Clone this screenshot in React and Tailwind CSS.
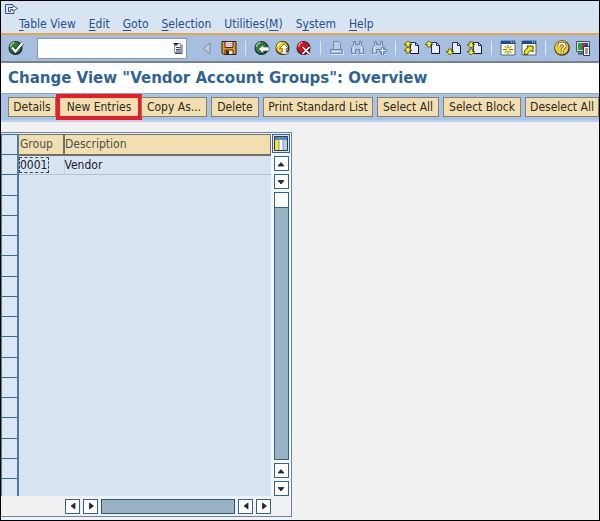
import React from "react";

const GREEN = "#2f7d3a";

function Icon({ children }) {
  return (
    <svg viewBox="0 0 16 16" className="block h-4 w-4" aria-hidden="true">
      {children}
    </svg>
  );
}

function Ball({ fill, shine }) {
  return (
    <>
      <circle cx="7.5" cy="8" r="7" fill="#1d2420" />
      <circle cx="7.2" cy="7.6" r="5.9" fill={fill} />
      <path d="M2.5 7a5 5 0 0 1 4-4.500" fill="none" stroke={shine} strokeWidth="1.6" />
    </>
  );
}

function Page() {
  return (
    <>
      <path d="M6.500 2.500h5l3 3v8h-8z" fill="#e6eefb" stroke="#26334d" />
      <path d="M11.500 2.500v3h3" fill="none" stroke="#26334d" />
      <path d="M7 13.500h7.500v-7" fill="none" stroke="#10182b" />
    </>
  );
}

function ArrowUp({ y }) {
  return (
    <path
      transform={`translate(0 ${y})`}
      d="M4 0l4 3.500H5.700V6H2.300V3.500H0z"
      fill="#f5ec1d"
      stroke="#3d3a08"
      strokeWidth=".7"
    />
  );
}

function ArrowDown({ y }) {
  return (
    <path
      transform={`translate(0 ${y})`}
      d="M4 6l4-3.500H5.700V0H2.300v2.500H0z"
      fill="#f5ec1d"
      stroke="#3d3a08"
      strokeWidth=".7"
    />
  );
}

function Binoculars({ plus }) {
  return (
    <>
      <path
        d="M3.500 1.500h2v3h4v-3h2v4l2 2v6h-4v-4h-4v4h-4v-6l2-2z"
        fill="#b3c9e6"
        stroke="#6985aa"
      />
      <path d="M2 14.500h4M10 14.500h4M3.500 6v6M11.500 6v6" stroke="#dce8f7" fill="none" />
      {plus && (
        <path
          d="M10.500 7.500h2v2h3v2h-3v3h-2v-3h-2v-2h2z"
          fill="#e3edf9"
          stroke="#6985aa"
        />
      )}
    </>
  );
}

function Window({ children }) {
  return (
    <>
      <path d="M1 1h14v14H1z" fill="#fffce0" stroke="#53687d" />
      <path d="M1 1h14v3H1z" fill="#1b4e96" />
      <path d="M11 2h1M13 2h1" stroke="#fff" />
      {children}
    </>
  );
}

const toolGroups = [
  [
    {
      name: "Collapse",
      icon: <path d="M10 3v11L3.500 8.500z" fill="#c9ced6" stroke="#7d8795" />,
    },
    {
      name: "Save",
      icon: (
        <>
          <path d="M1 1.500h14v13H2.500L1 13z" fill="#e99a20" stroke="#2b1a10" />
          <path d="M4 1.500h8v6H4z" fill="#f1d9de" stroke="#4a2216" />
          <path d="M5 3.500h6M5 5.500h6" stroke="#d8a9b3" />
          <path d="M4 10h8v4.500H4z" fill="#f8ecd0" stroke="#4a2216" />
          <path d="M5 10.500h3v4H5z" fill="#4a2216" />
        </>
      ),
    },
  ],
  [
    {
      name: "Back",
      icon: (
        <>
          <Ball fill={GREEN} shine="#8fcf8d" />
          <path d="M4.500 9l5-4.500V7H15v4H9.500v2.500z" fill="#fff" stroke="#24452a" strokeWidth=".6" />
        </>
      ),
    },
    {
      name: "Exit",
      icon: (
        <>
          <Ball fill="#f4c51c" shine="#fff59a" />
          <path d="M9 4l4.500 4.500H11V12h2v2H6v-2h1.500V8.500H4.500z" fill="#fff" stroke="#6b5210" strokeWidth=".7" />
        </>
      ),
    },
    {
      name: "Cancel",
      icon: (
        <>
          <Ball fill="#d3121d" shine="#f58c86" />
          <path d="M6.500 7l7 7M13.500 7l-7 7" stroke="#6d0b10" strokeWidth="3" />
          <path d="M6.500 7l7 7M13.500 7l-7 7" stroke="#fff" strokeWidth="1.700" />
        </>
      ),
    },
  ],
  [
    {
      name: "Print",
      icon: (
        <>
          <path d="M4.500 9.500v-8h5l2 2v6" fill="#b7cce8" stroke="#7089ad" />
          <path d="M1.500 9.500h12v4h-12z" fill="#a6bddb" stroke="#7089ad" />
          <path d="M2 14.500h12.500v-4M3 11.500h8" fill="none" stroke="#dce8f7" />
        </>
      ),
    },
    { name: "Find", icon: <Binoculars /> },
    { name: "Find next", icon: <Binoculars plus /> },
  ],
  [
    { name: "First page", icon: (<><Page /><ArrowUp y={1} /><ArrowUp y={7} /></>) },
    { name: "Previous page", icon: (<><Page /><ArrowUp y={1} /></>) },
    { name: "Next page", icon: (<><Page /><ArrowDown y={9} /></>) },
    { name: "Last page", icon: (<><Page /><ArrowDown y={2} /><ArrowDown y={9} /></>) },
  ],
  [
    {
      name: "New session",
      icon: (
        <Window>
          <path d="M8 5v9M3 9.500h10M4.500 6l7 7M11.500 6l-7 7" stroke="#77720c" />
          <path d="M6.500 8h3v3h-3z" fill="#fff34a" />
        </Window>
      ),
    },
    {
      name: "Create shortcut",
      icon: (
        <Window>
          <path d="M3 14.500c0-4 1.500-6 4-6.500L6 6h6v6l-2-1.500c-2 .5-3 2-3.500 4z" fill="#f2e32b" stroke="#3d3a08" strokeWidth=".9" />
        </Window>
      ),
    },
  ],
  [
    {
      name: "Help",
      icon: (
        <>
          <circle cx="8" cy="8" r="7.800" fill="#3e3514" />
          <circle cx="7.700" cy="7.600" r="6.800" fill="#f1ca2c" />
          <path d="M5 6.500c0-4 6-4 6-.5 0 2-2.700 2-2.700 4.500M8.300 11.500v2" fill="none" stroke="#6d5311" strokeWidth="3.200" />
          <path d="M5 6.500c0-4 6-4 6-.5 0 2-2.700 2-2.700 4.500M8.300 11.500v2" fill="none" stroke="#fffdf0" strokeWidth="1.700" />
        </>
      ),
    },
    {
      name: "Customize layout",
      icon: (
        <>
          <path d="M1.500 1.500h13v10h-13z" fill="#d9e1e8" stroke="#46515e" />
          <path d="M3 3h4v7H3z" fill="#1fa53c" />
          <path d="M7 3h3v7H7z" fill="#dc1d2a" />
          <path d="M10 3h3v7h-3z" fill="#2848b8" />
          <path d="M3 13.500h6" stroke="#46515e" strokeWidth="2" />
          <path d="M8.500 6.500h6v9h-6z" fill="#fff" stroke="#333b46" />
          <path d="M10 9h3M10 11h3M10 13h3" stroke="#333b46" />
        </>
      ),
    },
  ],
];

const menus = [
  ["", "T", "able View"],
  ["", "E", "dit"],
  ["", "G", "oto"],
  ["", "S", "election"],
  ["Utilities(", "M", ")"],
  ["S", "y", "stem"],
  ["", "H", "elp"],
];

const actions = [
  { label: "Details", width: "w-12" },
  { label: "New Entries", width: "w-[86px]", marked: true },
  { label: "Copy As...", width: "w-[66px]" },
  { label: "Delete", width: "w-12" },
  { label: "Print Standard List", width: "w-[110px]" },
  { label: "Select All", width: "w-[62px]" },
  { label: "Select Block", width: "w-[78px]" },
  { label: "Deselect All", width: "w-[74px]" },
];

const arrows = {
  up: "M3 8h6L6 4.500z",
  down: "M3 4.500h6L6 8z",
  left: "M8 3v6L4 6z",
  right: "M4.500 3v6l4-3z",
};

function ScrollButton({ dir }) {
  return (
    <button
      type="button"
      aria-label={`Scroll ${dir}`}
      className="flex h-[15px] w-[15px] shrink-0 items-center justify-center border border-[#2f6390] bg-white"
    >
      <svg viewBox="0 0 12 12" className="h-3 w-3" aria-hidden="true">
        <path d={arrows[dir]} fill="#25243a" stroke="#25243a" strokeWidth=".8" />
      </svg>
    </button>
  );
}

function MenuBar() {
  return (
    <header className="border-b-2 border-[#eda544] bg-[#d9e4f2]">
      <div className="flex h-[14px] items-end pl-[3px]">
        <svg viewBox="0 0 16 12" className="h-3 w-4" aria-hidden="true">
          <path d="M9 1.500H1.500v9H10V8.500" fill="none" stroke="#34557f" />
          <path d="M4.500 8.500V4.500H9V2.500L13.500 5.500 9 8V6.500H6.500v2z" fill="#fff" stroke="#34557f" />
        </svg>
      </div>
      <nav className="flex h-[18px] items-center gap-[13px] pl-[18px] text-xs text-[#24508a]">
        {menus.map(([before, key, after]) => (
          <button key={before + key + after} type="button" className="leading-4 whitespace-nowrap">
            {before}
            <span className="underline underline-offset-2">{key}</span>
            {after}
          </button>
        ))}
      </nav>
    </header>
  );
}

function ToolBar() {
  return (
    <div className="flex h-7 items-center border-b-2 border-[#77818f] bg-[#a6bfe1] pl-[7px]">
      <button type="button" aria-label="Enter" className="shrink-0">
        <Icon>
          <Ball fill={GREEN} shine="#8fcf8d" />
          <path d="M4 7.500l3.500 4L14.500 3" fill="none" stroke="#1c3b22" strokeWidth="3.600" />
          <path d="M4 7.500l3.500 4L14.500 3" fill="none" stroke="#fff" strokeWidth="2.200" />
        </Icon>
      </button>
      <div className="mx-[13px] flex h-[21px] w-[150px] shrink-0 items-center border border-[#8799ad] bg-white pr-[3px]">
        <input type="text" aria-label="Command" className="h-full w-full min-w-0 px-1 text-xs outline-none" />
        <button type="button" aria-label="Command history" className="shrink-0">
          <svg viewBox="0 0 10 12" className="block h-3 w-[10px]" aria-hidden="true">
            <path d="M1.500 1.500h6v9h-6z" fill="#eef2f8" stroke="#8490a3" />
            <path d="M0 1h6L3 4z" fill="#20293a" />
            <path d="M3 5.500h4M3 7.500h4M3 9h4M2 11.500h7v-9" fill="none" stroke="#39465a" />
          </svg>
        </button>
      </div>
      {toolGroups.map((group, i) => (
        <React.Fragment key={group[0].name}>
          {i > 0 && <span className="mx-2 h-[14px] w-px shrink-0 bg-[#dde8f5]" />}
          <div className="flex gap-[5px]">
            {group.map((tool) => (
              <button key={tool.name} type="button" aria-label={tool.name}>
                <Icon>{tool.icon}</Icon>
              </button>
            ))}
          </div>
        </React.Fragment>
      ))}
    </div>
  );
}

function ActionBar() {
  return (
    <div className="flex h-7 items-center border-b-2 border-[#b9d0ee] bg-[#a9c3e6] pl-[7px] text-xs text-[#2b2a22]">
      {actions.map(({ label, width, marked }) => (
        <button
          key={label}
          type="button"
          className={
            marked
              ? `${width} -mr-px h-[26px] shrink-0 border-4 border-[#e81c2b] bg-[#f3deb0] whitespace-nowrap`
              : `${width} ${label === "Details" ? "" : "mr-1"} h-5 shrink-0 border border-[#857f6c] bg-[#f3deb0] whitespace-nowrap`
          }
        >
          {label}
        </button>
      ))}
    </div>
  );
}

function GroupsTable() {
  const selectors = Array.from({ length: 18 }, (_, i) => i);
  return (
    <section className="flex w-[291px] flex-col border-t border-r border-b border-[#6683a3]">
      <div className="flex h-[363px] pt-px">
        <div className="flex w-[18px] shrink-0 flex-col border-r-2 border-l border-[#4f7f9c]">
          {selectors.map((i) => (
            <button
              key={i}
              type="button"
              aria-label={i ? `Select row ${i}` : "Select all rows"}
              className="w-full flex-1 border-t border-[#3e6c8c] bg-[#d9e8f3] last:h-[18px] last:flex-none"
            />
          ))}
        </div>
        <div className="min-w-0 flex-1 bg-[#d9e4f2]">
          <table className="w-full table-fixed border-collapse text-xs">
            <thead>
              <tr className="h-5 border-t border-b-2 border-[#6f7068] bg-[#f3deb0] text-left text-[#46544f]">
                <th className="w-[45px] border-r-2 border-[#6f7068] p-0 pl-px font-normal">Group</th>
                <th className="border-r border-[#6f7068] p-0 font-normal">Description</th>
              </tr>
            </thead>
            <tbody>
              <tr className="h-5 border-b border-[#b5c3d0] text-[#1b2128]">
                <td className="border-r border-[#c5d0dc] p-0">
                  <span className="block w-[30px] border border-dashed border-[#3a4350] leading-[14px]">
                    0001
                  </span>
                </td>
                <td className="p-0">Vendor</td>
              </tr>
            </tbody>
          </table>
        </div>
        <div className="flex w-5 shrink-0 flex-col items-center gap-[3px] bg-[#f6f8fa]">
          <button type="button" aria-label="Table settings" className="border border-[#2f6390] bg-[#d9e4f2]">
            <svg viewBox="0 0 16 17" className="block h-[17px] w-4" aria-hidden="true">
              <path d="M1.500 1.500h13v14h-13z" fill="#fff" stroke="#2a3a50" />
              <path d="M2 2h12v3H2z" fill="#4b87c7" />
              <path d="M2 5h4v10H2z" fill="#f5e62a" />
              <path d="M10 5h4v10h-4z" fill="#b9cfe5" />
              <path d="M6 2v13M10 2v13" stroke="#7e94a9" />
            </svg>
          </button>
          <ScrollButton dir="up" />
          <ScrollButton dir="down" />
          <div className="flex w-[15px] flex-1 flex-col border border-[#2f6390] bg-[#98b4c4]">
            <span className="h-[15px] border-b border-[#2f6390] bg-white" />
          </div>
          <ScrollButton dir="up" />
          <ScrollButton dir="down" />
        </div>
      </div>
      <div className="flex h-5 items-center gap-[3px] pr-5 pl-16">
        <ScrollButton dir="left" />
        <ScrollButton dir="right" />
        <div className="h-[15px] flex-1 border border-[#2f5878] bg-[#98b4c4]" />
        <ScrollButton dir="left" />
        <ScrollButton dir="right" />
      </div>
    </section>
  );
}

export default function App() {
  return (
    <div className="flex min-h-screen flex-col overflow-x-hidden border border-black bg-[#f1f1f1] font-['DejaVu_Sans_Condensed','DejaVu_Sans',sans-serif]">
      <MenuBar />
      <ToolBar />
      <div className="border-b border-[#86a9ca] bg-white">
        <h1 className="flex h-[30px] items-center pl-[7px] font-['DejaVu_Sans',sans-serif] text-[15px] font-bold whitespace-nowrap text-[#2f6490]">
          Change View "Vendor Account Groups": Overview
        </h1>
      </div>
      <ActionBar />
      <main className="pt-[10px]">
        <GroupsTable />
      </main>
    </div>
  );
}
